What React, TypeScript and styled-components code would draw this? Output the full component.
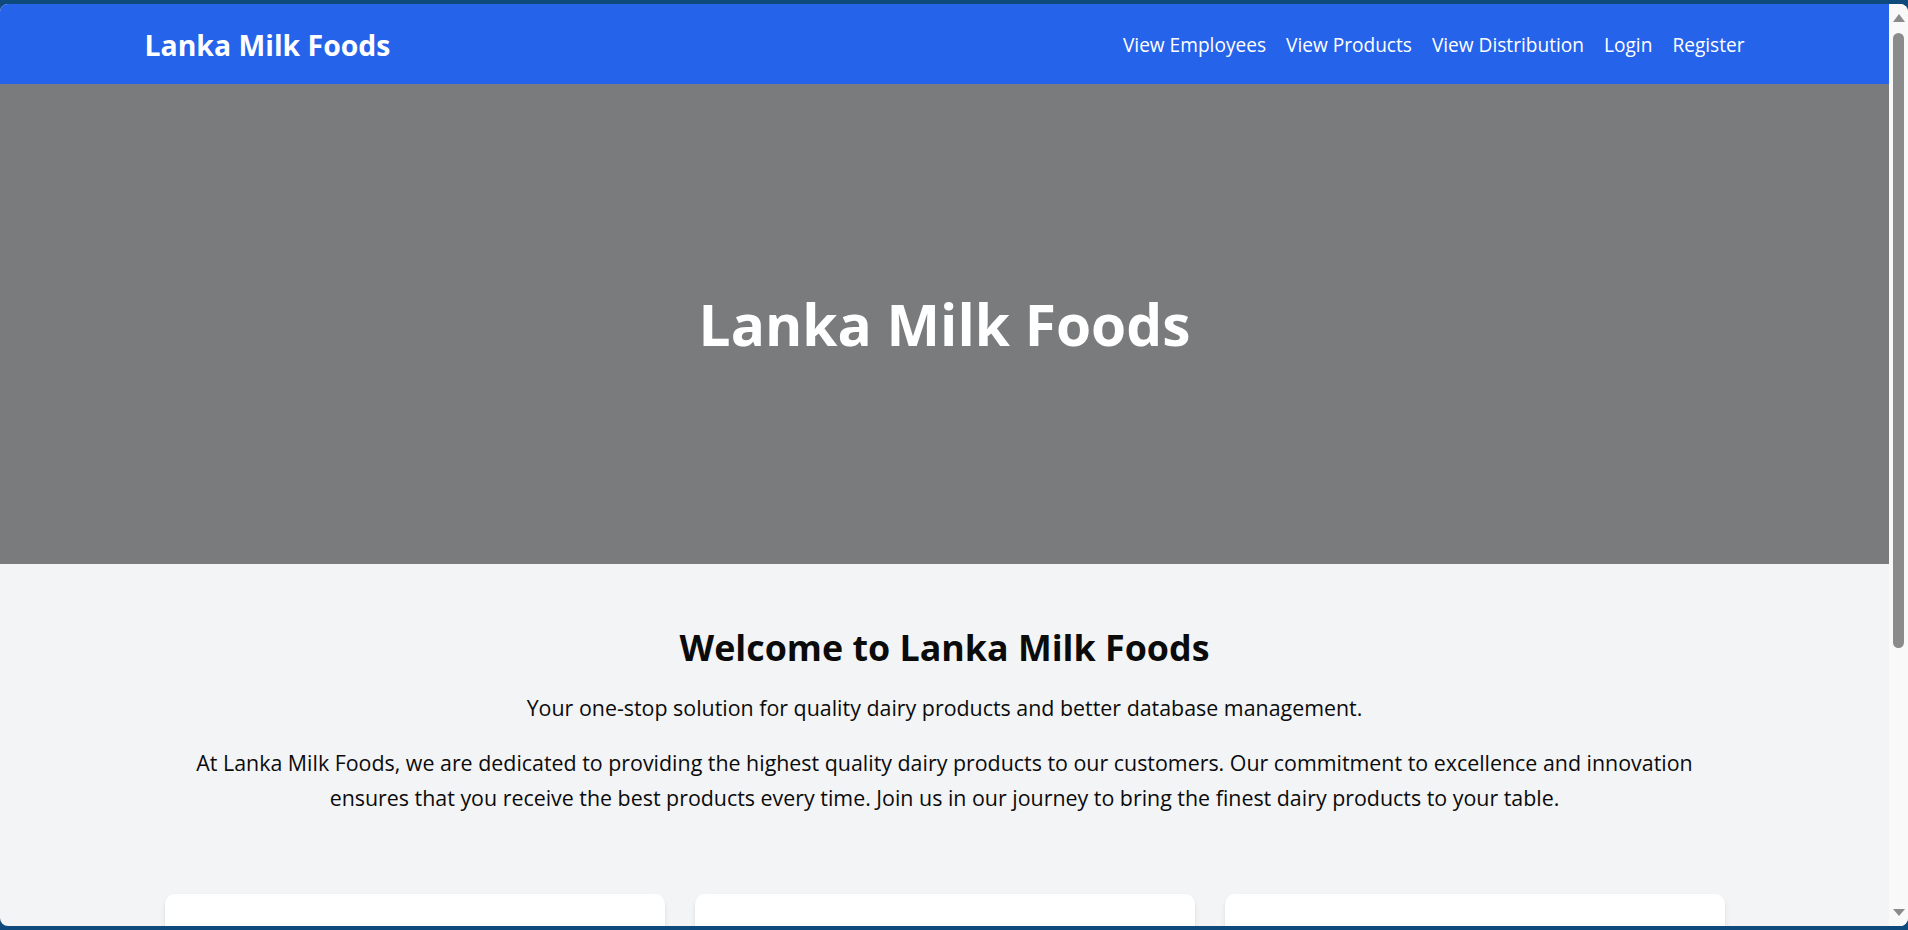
import React from 'react';
import styled, { createGlobalStyle } from 'styled-components';

const GlobalStyle = createGlobalStyle`
  html, body { margin: 0; padding: 0; }
  body {
    background: #0e4a7c;
    font-family: "Open Sans", "Noto Sans", sans-serif;
  }
  *, *::before, *::after { box-sizing: border-box; }
`;

const Frame = styled.div`
  height: 930px;
  padding: 4px 0;
  display: flex;
`;

const Window = styled.div`
  flex: 1;
  display: flex;
  border-radius: 8px;
  overflow: hidden;
  background: #f3f4f6;
`;

const Page = styled.div`
  flex: 1;
  min-width: 0;
  overflow: hidden;
`;

const NavBar = styled.header`
  height: 80px;
  background: #2563eb;
  color: #ffffff;
`;

const Container = styled.div<{ $padX?: number }>`
  width: 1600px;
  margin: 0 auto;
  padding: 0 ${(p) => p.$padX ?? 0}px;
`;

const NavInner = styled(Container)`
  height: 100%;
  padding-top: 2px;
  display: flex;
  align-items: center;
  justify-content: space-between;
`;

const Brand = styled.a`
  font-size: 28.4px;
  font-weight: 700;
  color: #ffffff;
  text-decoration: none;
`;

const NavLinks = styled.nav`
  display: flex;
  gap: 20px;
`;

const NavLink = styled.a`
  font-size: 19.1px;
  color: #ffffff;
  text-decoration: none;
`;

const Hero = styled.section`
  height: 480px;
  background: #7a7b7d;
  display: flex;
  align-items: center;
  justify-content: center;
`;

const HeroTitle = styled.h1`
  margin: 0;
  font-size: 56.8px;
  font-weight: 700;
  color: #ffffff;
`;

const Intro = styled(Container)`
  padding-top: 61px;
  text-align: center;
`;

const Heading = styled.h2`
  margin: 0 0 20px;
  font-size: 35.8px;
  line-height: 45px;
  font-weight: 700;
  color: #0b0b0b;
`;

const Text = styled.p<{ $gap?: number }>`
  margin: ${(p) => p.$gap ?? 0}px 0 0;
  font-size: 21.4px;
  line-height: 35px;
  color: #0b0b0b;
`;

const CardGrid = styled.div`
  margin-top: 79px;
  display: grid;
  grid-template-columns: repeat(3, 1fr);
  gap: 30px;
`;

const Card = styled.div`
  height: 320px;
  background: #ffffff;
  border-radius: 10px;
  box-shadow: 0 4px 6px -1px rgba(0, 0, 0, 0.1), 0 2px 4px -2px rgba(0, 0, 0, 0.1);
`;

const ScrollTrack = styled.aside`
  width: 19px;
  flex: none;
  background: #f9f9f9;
  display: flex;
  flex-direction: column;
  align-items: center;
  padding: 10px 0 10px;
`;

const Arrow = styled.div<{ $down?: boolean }>`
  width: 0;
  height: 0;
  border-left: 6px solid transparent;
  border-right: 6px solid transparent;
  ${(p) =>
    p.$down
      ? 'border-top: 7px solid #8b8b8b; margin-top: auto;'
      : 'border-bottom: 8px solid #8b8b8b;'}
`;

const Thumb = styled.div`
  margin-top: 11px;
  width: 11px;
  height: 615px;
  border-radius: 6px;
  background: #8b8b8b;
`;

const links = ['View Employees', 'View Products', 'View Distribution', 'Login', 'Register'];

export default function App() {
  return (
    <>
      <GlobalStyle />
      <Frame>
        <Window>
          <Page>
            <NavBar>
              <NavInner>
                <Brand href="#">Lanka Milk Foods</Brand>
                <NavLinks>
                  {links.map((l) => (
                    <NavLink key={l} href="#">
                      {l}
                    </NavLink>
                  ))}
                </NavLinks>
              </NavInner>
            </NavBar>
            <Hero>
              <HeroTitle>Lanka Milk Foods</HeroTitle>
            </Hero>
            <Intro $padX={20}>
              <Heading>Welcome to Lanka Milk Foods</Heading>
              <Text>Your one-stop solution for quality dairy products and better database management.</Text>
              <Text $gap={20}>
                At Lanka Milk Foods, we are dedicated to providing the highest quality dairy products to our
                customers. Our commitment to excellence and innovation ensures that you receive the best products
                every time. Join us in our journey to bring the finest dairy products to your table.
              </Text>
              <CardGrid>
                <Card />
                <Card />
                <Card />
              </CardGrid>
            </Intro>
          </Page>
          <ScrollTrack>
            <Arrow />
            <Thumb />
            <Arrow $down />
          </ScrollTrack>
        </Window>
      </Frame>
    </>
  );
}
